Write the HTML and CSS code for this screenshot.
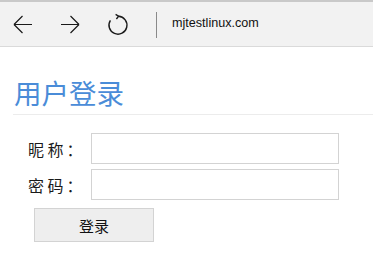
FILE: index.html
```html
<!DOCTYPE html>
<html lang="zh">
<head>
<meta charset="utf-8">
<title>用户登录</title>
<link rel="stylesheet" href="styles.css">
</head>
<body>
<div class="toolbar">
  <span class="tb-btn back">
    <svg width="20" height="20" viewBox="0 0 20 20"><path d="M1 9.5 H19 M1 9.5 L9.5 1 M1 9.5 L9.5 18" fill="none" stroke="#1a1a1a" stroke-width="1.2"/></svg>
  </span>
  <span class="tb-btn fwd">
    <svg width="20" height="20" viewBox="0 0 20 20"><path d="M1 9.5 H19 M19 9.5 L10.5 1 M19 9.5 L10.5 18" fill="none" stroke="#1a1a1a" stroke-width="1.2"/></svg>
  </span>
  <span class="tb-btn refresh">
    <svg width="20" height="20" viewBox="0 0 20 20"><path d="M10.5 1.2 A9 9 0 1 1 2.4 5.3" fill="none" stroke="#1a1a1a" stroke-width="1.4"/><path d="M7.6 -0.6 L10.6 1.2 L8.4 4" fill="none" stroke="#1a1a1a" stroke-width="1.4"/></svg>
  </span>
  <span class="sep"></span>
  <span class="url">mjtestlinux.com</span>
</div>
<main class="page">
  <h1 class="title">用户登录</h1>
  <form class="login">
    <label class="lbl" for="nick">昵 称<span class="colon">：</span></label>
    <input class="field" id="nick" type="text">
    <label class="lbl" for="pwd">密 码<span class="colon">：</span></label>
    <input class="field" id="pwd" type="password">
    <button class="submit" type="button">登录</button>
  </form>
</main>
</body>
</html>
```
FILE: styles.css
```css
html, body {
  margin: 0;
  padding: 0;
  background: #ffffff;
}
body {
  font-family: "Noto Sans CJK SC", "Liberation Sans", sans-serif;
  color: #1a1a1a;
}
.toolbar {
  height: 43px;
  border-top: 2px solid #c9c9c9;
  border-bottom: 1px solid #dadada;
  background: #f2f2f2;
  display: flex;
  align-items: center;
  padding-left: 13px;
  padding-top: 1px;
  box-sizing: content-box;
}
.tb-btn {
  width: 20px;
  height: 20px;
  display: flex;
}
.tb-btn svg { overflow: visible; }
.fwd { margin-left: 27px; }
.refresh { margin-left: 28px; }
.sep {
  width: 1px;
  height: 26px;
  background: #8a8a8a;
  margin-left: 28px;
}
.url {
  margin-left: 15px;
  font-family: "Liberation Sans", Arial, sans-serif;
  font-size: 12.6px;
  color: #111;
  margin-top: -3px;
}
.page {
  padding: 0 0 0 13px;
}
.title {
  margin: 0;
  padding-top: 27px;
  padding-bottom: 3px;
  padding-left: 1px;
  font-size: 27.5px;
  font-weight: normal;
  line-height: 37px;
  color: #4a8cd8;
  border-bottom: 1px solid #ececec;
}
.login {
  margin: 18px 0 0 15px;
  display: grid;
  grid-template-columns: 63px 248px;
  row-gap: 5px;
  align-items: center;
}
.lbl {
  font-size: 16px;
  color: #1a1a1a;
}
.colon {
  margin-left: 3px;
}
.field {
  box-sizing: border-box;
  width: 248px;
  height: 31px;
  margin: 0;
  border: 1px solid #d3d3d3;
  background: #fff;
  outline: none;
}
.submit {
  grid-column: 1 / span 2;
  justify-self: start;
  box-sizing: border-box;
  width: 120px;
  height: 34px;
  margin: 3px 0 0 6px;
  background: #eeeeee;
  border: 1px solid #d3d3d3;
  font-family: "Noto Sans CJK SC", sans-serif;
  font-size: 15px;
  color: #111;
  padding: 0;
}
```
